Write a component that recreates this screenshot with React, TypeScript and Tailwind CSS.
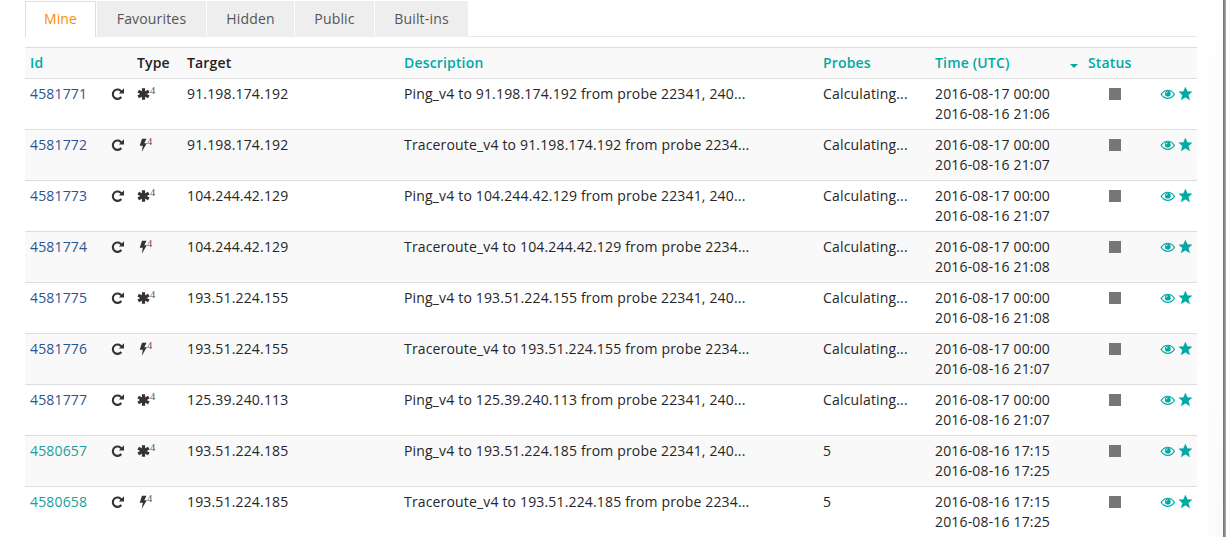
import React from "react";

type Kind = "ping" | "trace";
interface Row {
  id: string;
  kind: Kind;
  target: string;
  desc: string;
  probes: string;
  start: string;
  stop: string;
  owned?: boolean;
}

const rows: Row[] = [
  { id: "4581771", kind: "ping", target: "91.198.174.192", desc: "Ping_v4 to 91.198.174.192 from probe 22341, 240...", probes: "Calculating...", start: "2016-08-17 00:00", stop: "2016-08-16 21:06" },
  { id: "4581772", kind: "trace", target: "91.198.174.192", desc: "Traceroute_v4 to 91.198.174.192 from probe 2234...", probes: "Calculating...", start: "2016-08-17 00:00", stop: "2016-08-16 21:07" },
  { id: "4581773", kind: "ping", target: "104.244.42.129", desc: "Ping_v4 to 104.244.42.129 from probe 22341, 240...", probes: "Calculating...", start: "2016-08-17 00:00", stop: "2016-08-16 21:07" },
  { id: "4581774", kind: "trace", target: "104.244.42.129", desc: "Traceroute_v4 to 104.244.42.129 from probe 2234...", probes: "Calculating...", start: "2016-08-17 00:00", stop: "2016-08-16 21:08" },
  { id: "4581775", kind: "ping", target: "193.51.224.155", desc: "Ping_v4 to 193.51.224.155 from probe 22341, 240...", probes: "Calculating...", start: "2016-08-17 00:00", stop: "2016-08-16 21:08" },
  { id: "4581776", kind: "trace", target: "193.51.224.155", desc: "Traceroute_v4 to 193.51.224.155 from probe 2234...", probes: "Calculating...", start: "2016-08-17 00:00", stop: "2016-08-16 21:07" },
  { id: "4581777", kind: "ping", target: "125.39.240.113", desc: "Ping_v4 to 125.39.240.113 from probe 22341, 240...", probes: "Calculating...", start: "2016-08-17 00:00", stop: "2016-08-16 21:07" },
  { id: "4580657", kind: "ping", target: "193.51.224.185", desc: "Ping_v4 to 193.51.224.185 from probe 22341, 240...", probes: "5", start: "2016-08-16 17:15", stop: "2016-08-16 17:25", owned: true },
  { id: "4580658", kind: "trace", target: "193.51.224.185", desc: "Traceroute_v4 to 193.51.224.185 from probe 2234...", probes: "5", start: "2016-08-16 17:15", stop: "2016-08-16 17:25", owned: true },
];

const Repeat = () => (
  <svg viewBox="0 0 14 14" className="h-3.5 w-3.5 shrink-0">
    <path d="M10.3 10A4.7 4.700 0 1 1 9.700 3.700L10.500 4.500" fill="none" stroke="#333" strokeWidth="2.100" />
    <path d="M13 1.300v5.200H7.900z" fill="#333" />
  </svg>
);

const Asterisk = () => (
  <svg viewBox="0 0 14 14" className="h-3.5 w-3.5 shrink-0">
    <path d="M6.500 1.200v11.600M1.200 4.100l10.600 5.800M11.800 4.100L1.200 9.900" stroke="#333" strokeWidth="3.200" />
  </svg>
);

const Flash = () => (
  <svg viewBox="0 0 14 14" className="h-3.5 w-3.5 shrink-0">
    <path d="M5 .7L2.700 7.800h3.100L4.800 13.700 9.800 5.300H7.300L9.500.7z" fill="#333" />
  </svg>
);

const Eye = () => (
  <svg viewBox="0 0 15 12" className="h-3 w-[15px]">
    <path d="M1.100 6.400Q4 2.300 7.800 2.300T14.500 6.400Q11.600 10.400 7.800 10.400T1.100 6.400z" fill="none" stroke="#00a9a5" strokeWidth="1.100" />
    <circle cx="7.800" cy="5.700" r="2.900" fill="#00a9a5" />
    <path d="M6.200 5.400Q6.300 4.200 7.600 4" fill="none" stroke="#fff" strokeWidth=".9" />
  </svg>
);

const Star = () => (
  <svg viewBox="0 0 14 14" className="h-3.5 w-3.5">
    <path d="M7.400 0l2 4.500 4.600.2-3.600 3.200 1.300 5.100-4.300-2.800L3.100 13l1.300-5.100L.8 4.700l4.600-.2z" fill="#00a9a5" stroke="#00a9a5" strokeWidth=".3" />
  </svg>
);

const tab = "h-9 bg-[#eee] pt-2 text-center text-[#555]";
const sup = "mb-[5px] font-['Liberation_Serif',serif] text-[10.5px] leading-none tracking-normal text-[#555]";

export default function App() {
  return (
    <div className="flex h-[537px] w-[1226px] justify-between overflow-hidden bg-white font-['Open_Sans',sans-serif] text-[14px] leading-5 tracking-[0.165px] text-[#262626]">
      <div className="ml-[25px] w-[1172px] pt-px">
        <nav className="flex h-9 gap-px border-b border-[#e8e8e8]">
          <div className="h-9 w-[71px] border border-b-0 border-[#ddd] bg-white pt-[7px] text-center text-[#ff8c00]">Mine</div>
          <div className={tab + " w-[109px]"}>Favourites</div>
          <div className={tab + " w-[87px]"}>Hidden</div>
          <div className={tab + " w-[79px]"}>Public</div>
          <div className={tab + " w-[93px]"}>Built-ins</div>
        </nav>
        <table className="mt-2.5 w-[1172px] table-fixed border-separate border-spacing-0 text-left [&_td]:border-t [&_td]:border-[#ddd] [&_td]:p-[5px] [&_td]:align-top [&_th]:border-t [&_th]:border-[#ddd] [&_th]:p-[5px] [&_th]:font-semibold">
          <colgroup>
            <col className="w-[81px]" />
            <col className="w-[26px]" />
            <col className="w-[50px]" />
            <col className="w-[217px]" />
            <col className="w-[419px]" />
            <col className="w-[112px]" />
            <col className="w-[153px]" />
            <col className="w-[64px]" />
            <col className="w-[50px]" />
          </colgroup>
          <thead>
            <tr className="bg-[#f9f9f9] text-[#00a9a5]">
              <th>Id</th>
              <th />
              <th className="text-[#222]">Type</th>
              <th className="text-[#222]">Target</th>
              <th>Description</th>
              <th>Probes</th>
              <th>
                <div className="flex items-center justify-between">
                  Time (UTC)
                  <svg viewBox="0 0 8 4" className="mt-1.5 h-1 w-2"><path d="M0 0h8L4 4z" fill="#00a9a5" /></svg>
                </div>
              </th>
              <th>Status</th>
              <th />
            </tr>
          </thead>
          <tbody>
            {rows.map((r) => (
              <tr key={r.id} className="even:bg-[#f9f9f9]">
                <td className={r.owned ? "text-[#16a09c]" : "text-[#2a5591]"}>{r.id}</td>
                <td><div className="flex h-5 items-center"><Repeat /></div></td>
                <td>
                  <div className="flex h-5 items-center">
                    {r.kind === "ping" ? <Asterisk /> : <Flash />}
                    <span className={r.kind === "ping" ? sup + " -ml-px" : sup + " -ml-1"}>4</span>
                  </div>
                </td>
                <td>{r.target}</td>
                <td className="whitespace-nowrap">{r.desc}</td>
                <td>{r.probes}</td>
                <td>{r.start}<br />{r.stop}</td>
                <td><div className="flex h-5 items-center justify-center"><div className="h-3 w-3 bg-[#777]" /></div></td>
                <td><div className="flex h-5 items-center justify-end gap-[3px]"><Eye /><Star /></div></td>
              </tr>
            ))}
          </tbody>
        </table>
      </div>
      <div className="flex">
        <div className="w-4 bg-linear-to-br from-white to-[#fafafa]" />
        <div className="w-px bg-[#777]" />
        <div className="w-px bg-[#8b8b88]" />
        <div className="w-px bg-[#a5a59f]" />
      </div>
    </div>
  );
}
